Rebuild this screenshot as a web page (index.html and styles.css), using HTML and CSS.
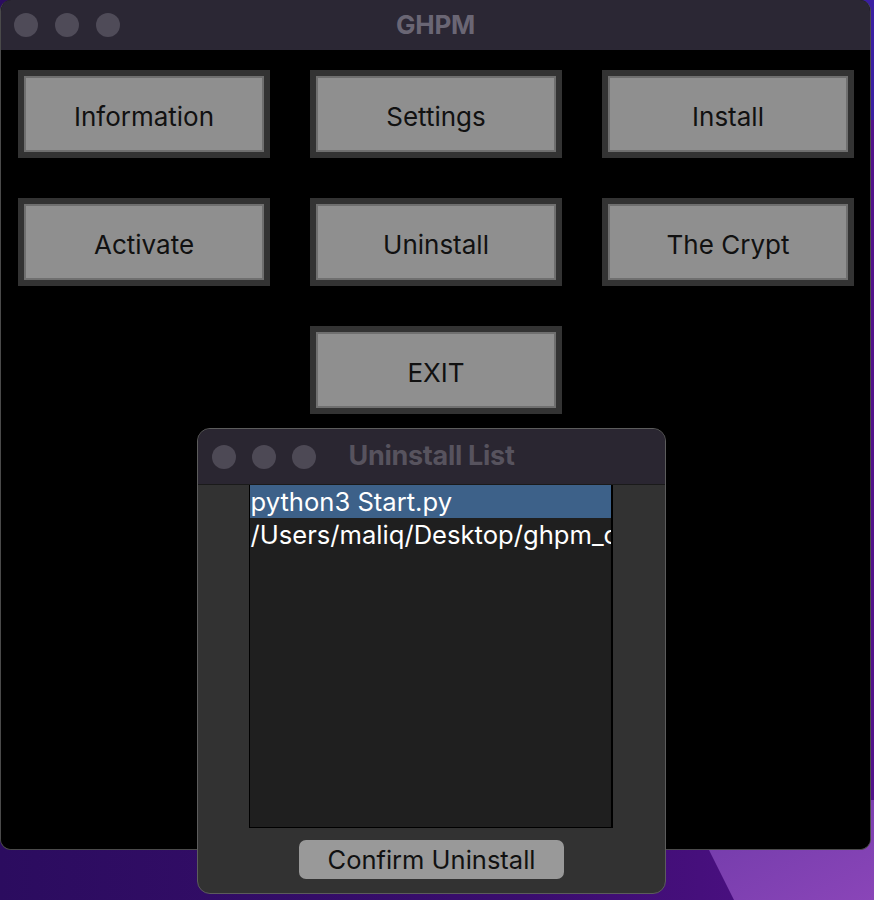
FILE: index.html
```html
<!DOCTYPE html>
<html>
<head>
<meta charset="utf-8">
<link rel="stylesheet" href="styles.css">
</head>
<body>
<div class="desktop">
  <svg class="wallpaper" width="874" height="900" viewBox="0 0 874 900" preserveAspectRatio="none">
    <defs>
      <linearGradient id="dark" x1="0" y1="0" x2="1" y2="0">
        <stop offset="0" stop-color="#2b0c5f"/>
        <stop offset="0.6" stop-color="#3a0d6e"/>
        <stop offset="1" stop-color="#52118a"/>
      </linearGradient>
      <linearGradient id="light" x1="0" y1="0" x2="1" y2="1">
        <stop offset="0" stop-color="#6e3aa8"/>
        <stop offset="1" stop-color="#8a45b8"/>
      </linearGradient>
    </defs>
    <rect x="0" y="0" width="874" height="900" fill="url(#dark)"/>
    <rect x="860" y="0" width="14" height="120" fill="#3a1fa2"/>
    <polygon points="684,800 874,800 874,900 734,900" fill="url(#light)"/>
  </svg>
</div>

<div class="window main-window">
  <div class="titlebar">
    <div class="lights"><span></span><span></span><span></span></div>
    <div class="title">GHPM</div>
  </div>
  <div class="content">
    <div class="button-grid">
      <div class="btn">Information</div>
      <div class="btn">Settings</div>
      <div class="btn">Install</div>
      <div class="btn">Activate</div>
      <div class="btn">Uninstall</div>
      <div class="btn">The Crypt</div>
      <div class="btn exit">EXIT</div>
    </div>
  </div>
</div>

<div class="window dialog">
  <div class="titlebar dialog-bar">
    <div class="lights"><span></span><span></span><span></span></div>
    <div class="title">Uninstall List</div>
  </div>
  <div class="dialog-body">
    <div class="listbox">
      <div class="row selected">python3 Start.py</div>
      <div class="row">/Users/maliq/Desktop/ghpm_c</div>
    </div>
    <div class="confirm">Confirm Uninstall</div>
  </div>
</div>
</body>
</html>
```

FILE: styles.css
```css
* { box-sizing: border-box; }

html, body {
  margin: 0;
  padding: 0;
  width: 874px;
  height: 900px;
  overflow: hidden;
  font-family: Inter, "Liberation Sans", sans-serif;
  background: #2b0c5f;
}

.desktop {
  position: absolute;
  inset: 0;
}

.wallpaper { display: block; }

.window {
  position: absolute;
  overflow: hidden;
}

.main-window {
  left: 0;
  top: 0;
  width: 871px;
  height: 850px;
  border-radius: 11px;
  background: #000;
  border: 1px solid #4a4a4a;
  border-top: none;
  display: flex;
  flex-direction: column;
}

.titlebar {
  height: 50px;
  flex: none;
  background: #2b2734;
  display: grid;
  grid-template-columns: 1fr auto 1fr;
  align-items: center;
}

.lights {
  display: flex;
  gap: 17px;
  padding-left: 13px;
}

.lights span {
  width: 24px;
  height: 24px;
  border-radius: 50%;
  background: #4f4b58;
}

.title {
  font-weight: 700;
  font-size: 26px;
  color: #6a6674;
  letter-spacing: -0.3px;
  margin-top: -2px;
}

.content {
  flex: 1;
  background: #000;
  padding: 20px 0 0 17px;
}

.button-grid {
  display: grid;
  grid-template-columns: repeat(3, 252px);
  grid-auto-rows: 88px;
  column-gap: 40px;
  row-gap: 40px;
}

.btn {
  border: 6px solid #333333;
  box-shadow: inset 0 0 0 2px #6f6f6f;
  background: #8f8f8f;
  color: #111;
  font-size: 26px;
  display: flex;
  align-items: center;
  justify-content: center;
  padding-top: 5px;
}

.exit { grid-column: 2; }

.dialog {
  left: 197px;
  top: 428px;
  width: 469px;
  height: 466px;
  border-radius: 13px;
  border: 1px solid #5c5c5c;
  background: #323232;
  display: flex;
  flex-direction: column;
}

.dialog-bar {
  height: 56px;
  background: #2a2631;
  border-bottom: 1px solid #1a1a1a;
}

.dialog-bar .lights {
  gap: 16px;
  padding-left: 14px;
  padding-top: 1px;
}

.dialog-bar .lights span {
  background: #4d4955;
}

.dialog-bar .title {
  color: #57535e;
  font-size: 27px;
  margin-top: -3px;
}

.dialog-body {
  flex: 1;
  display: flex;
  flex-direction: column;
  align-items: center;
}

.listbox {
  width: 364px;
  height: 343px;
  background: #1f1f1f;
  border: 1px solid #000;
  border-right-width: 2px;
  border-top: none;
  overflow: hidden;
  margin-left: -2px;
}

.row {
  height: 33px;
  line-height: 33px;
  font-size: 25.6px;
  color: #fff;
  white-space: nowrap;
  overflow: hidden;
  padding-left: 1px;
}

.row.selected { background: #3d6189; }

.confirm {
  margin-top: 12px;
  width: 265px;
  height: 39px;
  border-radius: 7px;
  background: #999999;
  color: #111;
  font-size: 25.5px;
  display: flex;
  align-items: center;
  justify-content: center;
}
```
